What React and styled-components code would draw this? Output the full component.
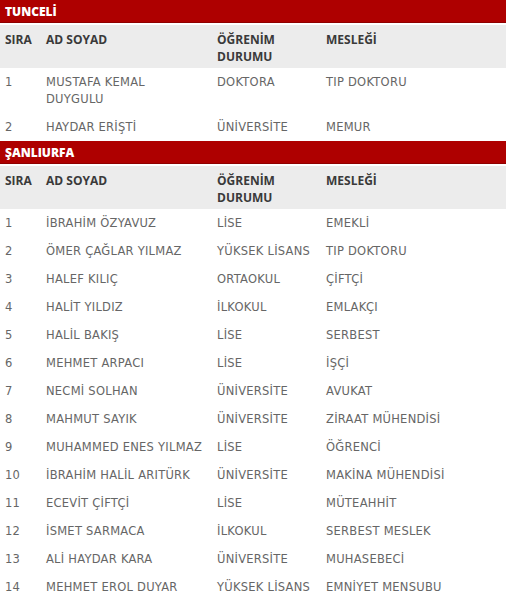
import styled, { createGlobalStyle } from "styled-components";

const GlobalStyle = createGlobalStyle`
    body {
        margin: 0;
        background: #ffffff;
        font-family: "DejaVu Sans", "Open Sans", sans-serif;
    }
`;

const data = [
    {
        city: "TUNCELİ",
        rows: [
            ["1", "MUSTAFA KEMAL DUYGULU", "DOKTORA", "TIP DOKTORU"],
            ["2", "HAYDAR ERİŞTİ", "ÜNİVERSİTE", "MEMUR"],
        ],
    },
    {
        city: "ŞANLIURFA",
        rows: [
            ["1", "İBRAHİM ÖZYAVUZ", "LİSE", "EMEKLİ"],
            ["2", "ÖMER ÇAĞLAR YILMAZ", "YÜKSEK LİSANS", "TIP DOKTORU"],
            ["3", "HALEF KILIÇ", "ORTAOKUL", "ÇİFTÇİ"],
            ["4", "HALİT YILDIZ", "İLKOKUL", "EMLAKÇI"],
            ["5", "HALİL BAKIŞ", "LİSE", "SERBEST"],
            ["6", "MEHMET ARPACI", "LİSE", "İŞÇİ"],
            ["7", "NECMİ SOLHAN", "ÜNİVERSİTE", "AVUKAT"],
            ["8", "MAHMUT SAYIK", "ÜNİVERSİTE", "ZİRAAT MÜHENDİSİ"],
            ["9", "MUHAMMED ENES YILMAZ", "LİSE", "ÖĞRENCİ"],
            ["10", "İBRAHİM HALİL ARITÜRK", "ÜNİVERSİTE", "MAKİNA MÜHENDİSİ"],
            ["11", "ECEVİT ÇİFTÇİ", "LİSE", "MÜTEAHHİT"],
            ["12", "İSMET SARMACA", "İLKOKUL", "SERBEST MESLEK"],
            ["13", "ALİ HAYDAR KARA", "ÜNİVERSİTE", "MUHASEBECİ"],
            ["14", "MEHMET EROL DUYAR", "YÜKSEK LİSANS", "EMNİYET MENSUBU"],
        ],
    },
];

const App = () => {
    return (
        <Page lang="tr">
            <GlobalStyle />
            {data.map((section) => (
                <Section key={section.city}>
                    <CityBar>{section.city}</CityBar>
                    <HeadRow>
                        <HeadCell>SIRA</HeadCell>
                        <HeadCell>AD SOYAD</HeadCell>
                        <HeadCell>
                            ÖĞRENİM
                            <br />
                            DURUMU
                        </HeadCell>
                        <HeadCell>MESLEĞİ</HeadCell>
                    </HeadRow>
                    {section.rows.map((r) => (
                        <Row key={r[0]}>
                            <Cell>{r[0]}</Cell>
                            <Cell $wrap={section.city === "TUNCELİ"}>{r[1]}</Cell>
                            <Cell>{r[2]}</Cell>
                            <Cell>{r[3]}</Cell>
                        </Row>
                    ))}
                </Section>
            ))}
        </Page>
    );
};

const Page = styled.div`
    width: 506px;
    display: flex;
    flex-direction: column;
`;
const Section = styled.div`
    display: flex;
    flex-direction: column;
`;
const CityBar = styled.div`
    background-color: #ae0000;
    color: #ffffff;
    font-family: "Open Sans", "Noto Sans", sans-serif;
    font-weight: 800;
    font-size: 12px;
    height: 23px;
    line-height: 23px;
    padding-left: 5px;
    margin-bottom: 2px;
    border-bottom: 1px solid #8f0000;
    box-sizing: border-box;
`;
const grid = `
    display: grid;
    grid-template-columns: 41px 171px 109px 1fr;
    padding-left: 5px;
`;
const HeadRow = styled.div`
    ${grid}
    background-color: #ececec;
    height: 43px;
    padding-top: 6px;
    box-sizing: border-box;
`;
const HeadCell = styled.div`
    font-family: "Open Sans", "Noto Sans", sans-serif;
    font-size: 12px;
    font-weight: 700;
    line-height: 17px;
    color: #3a3a3a;
`;
const Row = styled.div`
    ${grid}
    padding-top: 5.5px;
    padding-bottom: 5.5px;
`;
const Cell = styled.div`
    font-size: 11.5px;
    letter-spacing: 0.25px;
    line-height: 17px;
    color: #666666;
    max-width: ${(p) => (p.$wrap ? "118px" : "none")};
`;

export default App;
